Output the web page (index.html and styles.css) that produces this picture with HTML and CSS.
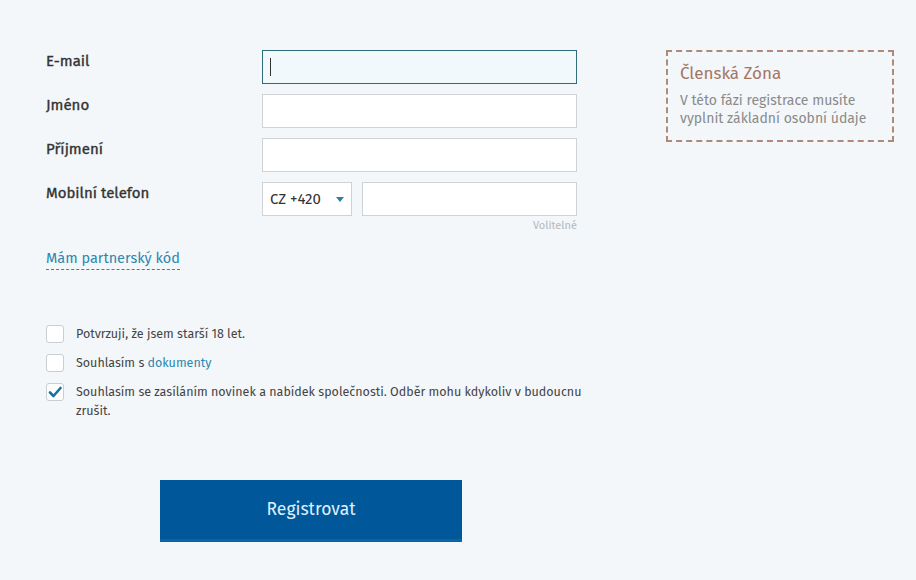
FILE: index.html
```html
<!DOCTYPE html>
<html lang="cs">
<head>
<meta charset="utf-8">
<title>Registrace</title>
<link rel="stylesheet" href="styles.css">
</head>
<body>
<div class="page">
  <div class="form">
    <div class="row">
      <label class="label">E-mail</label>
      <div class="field"><div class="input focused"><span class="caret"></span></div></div>
    </div>
    <div class="row">
      <label class="label">Jméno</label>
      <div class="field"><div class="input"></div></div>
    </div>
    <div class="row">
      <label class="label">Příjmení</label>
      <div class="field"><div class="input"></div></div>
    </div>
    <div class="row phone-row">
      <label class="label">Mobilní telefon</label>
      <div class="field">
        <div class="phone">
          <div class="select">CZ +420
            <svg class="arrow" width="8" height="5" viewBox="0 0 8 5"><path d="M0 0 L8 0 L4 5 Z" fill="#2d7fa6"/></svg>
          </div>
          <div class="input phone-input"></div>
        </div>
        <div class="optional">Volitelné</div>
      </div>
    </div>
    <div class="partner"><a class="partner-link">Mám partnerský kód</a></div>

    <div class="checks">
      <div class="check">
        <span class="box"></span>
        <span class="check-text">Potvrzuji, že jsem starší 18 let.</span>
      </div>
      <div class="check">
        <span class="box"></span>
        <span class="check-text">Souhlasím s <a class="link">dokumenty</a></span>
      </div>
      <div class="check">
        <span class="box checked"><svg width="14" height="12" viewBox="0 0 14 12"><path d="M2 6.5 L5.5 10 L12.5 2" fill="none" stroke="#1d6f9e" stroke-width="2.6" stroke-linecap="round" stroke-linejoin="round"/></svg></span>
        <span class="check-text">Souhlasím se zasíláním novinek a nabídek společnosti. Odběr mohu kdykoliv v budoucnu zrušit.</span>
      </div>
    </div>

    <div class="actions"><button class="submit">Registrovat</button></div>
  </div>
  <aside class="zone">
    <div class="zone-title">Členská Zóna</div>
    <div class="zone-text">V této fázi registrace musíte vyplnit základní osobní údaje</div>
  </aside>
</div>
</body>
</html>
```
FILE: styles.css
```css
html, body {
  margin: 0;
  padding: 0;
  background: #f3f7fa;
  font-family: "Fira Sans", "Open Sans", "Noto Sans", sans-serif;
  color: #333;
}
.page {
  display: flex;
  padding: 50px 0 0 46px;
  width: 916px;
  height: 580px;
  box-sizing: border-box;
}
.form {
  width: 531px;
}
.row {
  display: flex;
  align-items: flex-start;
  margin-bottom: 10px;
}
.label {
  width: 216px;
  font-size: 15px;
  font-weight: 400;
  -webkit-text-stroke: 0.35px #333;
  color: #333;
  padding-top: 2px;
}
.field {
  width: 315px;
}
.input {
  height: 32px;
  border: 1px solid #cfd3d6;
  background: #fff;
  box-sizing: content-box;
}
.input.focused {
  border-color: #2f6d7d;
  background: #f2f9fc;
  display: flex;
  align-items: center;
  padding-left: 7px;
  width: 306px;
}
.caret {
  width: 1px;
  height: 18px;
  background: #333;
}
.phone {
  display: flex;
  gap: 10px;
}
.select {
  height: 32px;
  border: 1px solid #cfd3d6;
  background: #fff;
  display: flex;
  align-items: center;
  justify-content: space-between;
  padding: 0 7px 0 7px;
  box-sizing: content-box;
  width: 74px;
  font-size: 15px;
  color: #333;
}
.phone-input {
  flex: 1;
}
.optional {
  text-align: right;
  font-size: 11px;
  color: #b4b9bd;
  margin-top: 3px;
}
.phone-row { margin-bottom: 16px; }
.partner {
  height: 22px;
}
.partner-link {
  font-size: 14.5px;
  color: #2e86ad;
  border-bottom: 1px dashed #2e86ad;
  padding-bottom: 2px;
}
.checks {
  margin-top: 54px;
  display: flex;
  flex-direction: column;
  gap: 10px;
}
.check {
  display: flex;
  align-items: flex-start;
  width: 580px;
}
.box {
  flex: none;
  width: 16px;
  height: 16px;
  border: 1px solid #c9ced2;
  border-radius: 3px;
  background: #fff;
  margin-right: 12px;
  margin-top: 1px;
  display: flex;
  align-items: center;
  justify-content: center;
}
.check-text {
  max-width: 516px;
  font-size: 12.5px;
  line-height: 19px;
  color: #444;
}
.link { color: #2e86ad; }
.actions {
  margin-top: 60px;
  padding-left: 114px;
}
.submit {
  width: 302px;
  height: 62px;
  border: none;
  background: #00589a;
  border-bottom: 3px solid #0b64a6;
  color: #dff0ff;
  font-family: inherit;
  font-size: 17.5px;
}
.zone {
  margin-left: 89px;
  width: 228px;
  height: 92px;
  box-sizing: border-box;
  border: 2px dashed #ae8a78;
  padding: 11px 12px;
}
.zone-title {
  font-size: 17px;
  color: #a5755f;
  margin-bottom: 8px;
}
.zone-text {
  font-size: 14px;
  line-height: 18px;
  color: #8a8a8a;
}
```
